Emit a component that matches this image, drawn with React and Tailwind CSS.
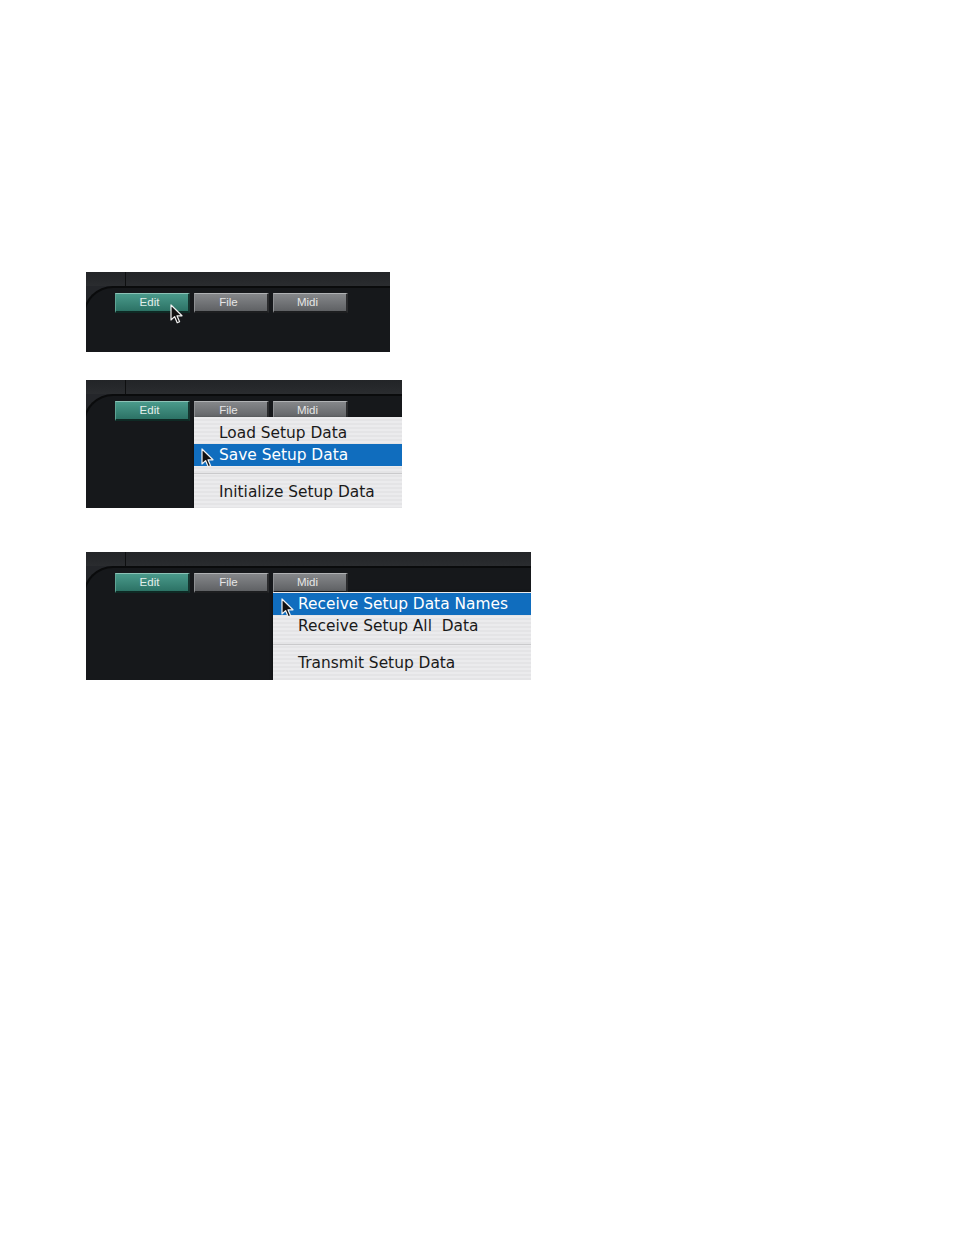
import React from 'react'

const Cursor = ({ className }) => (
  <svg className={className} width="14" height="21" viewBox="0 0 14 21">
    <path
      d="M1 1 L1 16 L4.6 12.6 L7.2 18.8 L9.6 17.8 L7 11.8 L12 11.8 Z"
      fill="#111"
      stroke="#f2f2f2"
      strokeWidth="1.2"
      strokeLinejoin="round"
    />
  </svg>
)

const TabButton = ({ label, active }) => (
  <div
    className={
      'w-[75px] h-[20px] flex items-center justify-center pr-[5px] text-[11.5px] leading-none border-t border-l border-b-2 border-r-2 ' +
      (active
        ? 'bg-[linear-gradient(to_bottom,#4a9a8b,#2c7265)] border-t-[#8cc2b6] border-l-[#5fa394] border-b-[#0f2a25] border-r-[#16342e] text-[#e3eeeb]'
        : 'bg-[linear-gradient(to_bottom,#85878a,#5f6164)] border-t-[#b0b2b4] border-l-[#8e9093] border-b-[#1d1e20] border-r-[#2a2b2d] text-[#e6e6e6]')
    }
    style={{ fontFamily: '"Liberation Sans", Arial, sans-serif' }}
  >
    {label}
  </div>
)

const MenuItem = ({ label, selected }) => (
  <div
    className={
      'h-[22px] flex items-center pl-[25px] pt-[2px] text-[15.4px] whitespace-pre ' +
      (selected ? 'bg-[#106dbe] text-white' : 'text-[#1a1a1a]')
    }
  >
    {label}
  </div>
)

const Menu = ({ items, className }) => (
  <div
    className={
      'absolute bottom-0 right-0 bg-[repeating-linear-gradient(to_bottom,#ebebed_0px,#ebebed_2px,#e4e4e6_2px,#e4e4e6_4px)] shadow-[0_1px_3px_rgba(0,0,0,0.5)] ' +
      className
    }
    style={{ fontFamily: '"DejaVu Sans", Verdana, sans-serif' }}
  >
    {items.map((it, i) =>
      it === '-' ? (
        <div key={i} className="h-[15px] flex items-center">
          <div className="w-full h-px bg-[#cacacc]" />
        </div>
      ) : (
        <MenuItem key={i} label={it.label} selected={it.selected} />
      )
    )}
  </div>
)

const Panel = ({ width, height, children }) => (
  <div className="relative bg-[#24262a] flex flex-col overflow-hidden" style={{ width, height }}>
    {/* top frame band */}
    <div className="h-[14px] shrink-0 bg-[linear-gradient(to_bottom,#222427,#2a2c2f)] flex">
      <div className="w-[40px] border-r border-[#0e0f10]" />
    </div>
    <div className="flex-1 -ml-[3px] bg-[#16181b] rounded-tl-[30px] border-t-2 border-l-2 border-[#0a0b0c]">
      <div className="flex gap-[4px] pl-[30px] pt-[5px]">
        <TabButton label="Edit" active />
        <TabButton label="File" />
        <TabButton label="Midi" />
      </div>
    </div>
    {children}
  </div>
)

export default function App() {
  return (
    <div className="min-h-[1235px] bg-white flex flex-col pl-[86px] pt-[272px]">
      <Panel width={304} height={80}>
        <Cursor className="absolute left-[84px] top-[32px]" />
      </Panel>

      <div className="mt-[28px]">
        <Panel width={316} height={128}>
          <Menu
            className="w-[208px] h-[91px] pt-[5px]"
            items={[
              { label: 'Load Setup Data' },
              { label: 'Save Setup Data', selected: true },
              '-',
              { label: 'Initialize Setup Data' },
            ]}
          />
          <Cursor className="absolute left-[115px] top-[68px]" />
        </Panel>
      </div>

      <div className="mt-[44px]">
        <Panel width={445} height={128}>
          <Menu
            className="w-[258px] h-[88px] pt-[1px]"
            items={[
              { label: 'Receive Setup Data Names', selected: true },
              { label: 'Receive Setup All  Data' },
              '-',
              { label: 'Transmit Setup Data' },
            ]}
          />
          <Cursor className="absolute left-[195px] top-[46px]" />
        </Panel>
      </div>
    </div>
  )
}
